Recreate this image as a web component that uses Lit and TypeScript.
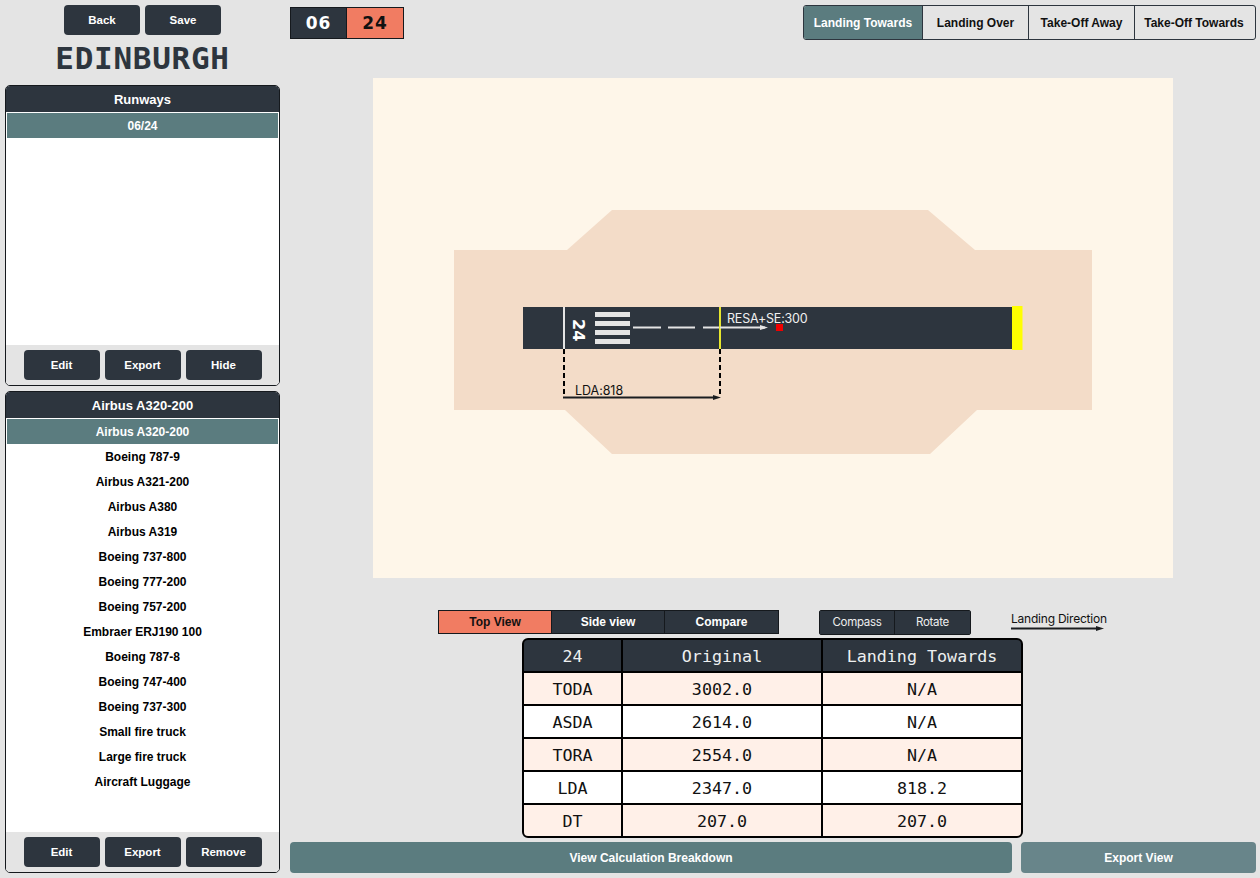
import { LitElement, html, css, svg } from "lit";
import { customElement, property } from "lit/decorators.js";
import { classMap } from "lit/directives/class-map.js";

const RUNWAYS = ["06/24"];
const AIRCRAFT = [
  "Airbus A320-200",
  "Boeing 787-9",
  "Airbus A321-200",
  "Airbus A380",
  "Airbus A319",
  "Boeing 737-800",
  "Boeing 777-200",
  "Boeing 757-200",
  "Embraer ERJ190 100",
  "Boeing 787-8",
  "Boeing 747-400",
  "Boeing 737-300",
  "Small fire truck",
  "Large fire truck",
  "Aircraft Luggage",
];
const ROWS = [
  ["TODA", "3002.0", "N/A"],
  ["ASDA", "2614.0", "N/A"],
  ["TORA", "2554.0", "N/A"],
  ["LDA", "2347.0", "818.2"],
  ["DT", "207.0", "207.0"],
];

@customElement("list-panel")
export class ListPanel extends LitElement {
  @property() heading = "";
  @property({ type: Array }) items: string[] = [];
  @property({ type: Array }) actions: string[] = [];

  static styles = css`
    :host {
      display: flex;
      flex-direction: column;
      width: 275px;
      box-sizing: border-box;
      border: 1px solid #15191d;
      border-radius: 5px;
      background: #fff;
      overflow: hidden;
      font-family: "Liberation Sans", Arial, sans-serif;
      font-weight: 700;
    }
    .head {
      height: 26px;
      line-height: 27px;
      background: #2d353e;
      color: #fff;
      font-size: 13px;
      text-align: center;
      flex: none;
    }
    .items {
      flex: 1;
      padding: 1px 1px 0;
      background: #fff;
    }
    .item {
      height: 25px;
      line-height: 27px;
      font-size: 12px;
      text-align: center;
      color: #000;
    }
    .item.sel {
      background: #5b7c7f;
      color: #fff;
    }
    .foot {
      flex: none;
      height: 40px;
      box-sizing: border-box;
      padding: 5px 17px 0 17.5px;
      background: #e4e4e4;
      display: flex;
      gap: 5px;
    }
    button {
      width: 76px;
      height: 30px;
      padding: 0;
      border: 0;
      border-radius: 4px;
      background: #2d353e;
      color: #fff;
      font: 700 11.5px "Liberation Sans", Arial, sans-serif;
    }
  `;

  render() {
    return html`
      <div class="head">${this.heading}</div>
      <div class="items">
        ${this.items.map(
          (t, i) => html`<div class=${classMap({ item: true, sel: i === 0 })}>${t}</div>`
        )}
      </div>
      <div class="foot">${this.actions.map((a) => html`<button>${a}</button>`)}</div>
    `;
  }
}

@customElement("runway-view")
export class RunwayView extends LitElement {
  static styles = css`
    :host {
      display: block;
      width: 800px;
      height: 500px;
      background: #fef6e9;
    }
    svg {
      display: block;
    }
    text {
      font-family: Inter, "Liberation Sans", sans-serif;
      font-size: 12.5px;
      letter-spacing: -0.2px;
    }
    .lda {
      letter-spacing: -0.05px;
    }
    .num {
      font-family: "DejaVu Sans", sans-serif;
      font-size: 16px;
      font-weight: 700;
      letter-spacing: 0;
    }
  `;

  render() {
    const stripes = [234, 243, 252, 261];
    const dashes = [[260, 288], [295, 322], [330, 347]];
    return html`
      <svg width="800" height="500" viewBox="0 0 800 500">
        <polygon
          fill="#f3dcc8"
          points="81,172 194,172 239,132 555,132 602,172 719,172 719,332 604,332 557,376 239,376 192,332 81,332"
        />
        <rect x="150" y="229" width="489" height="42" fill="#2d353e" />
        <rect x="639" y="228" width="10.5" height="44" fill="#ffff00" />
        <rect x="190" y="229" width="2" height="42" fill="#e4e4e4" />
        ${stripes.map((y) => svg`<rect x="222" y=${y} width="35" height="5" fill="#e4e4e4" />`)}
        ${dashes.map(([a, b]) => svg`<line x1=${a} x2=${b} y1="249.5" y2="249.5" stroke="#e4e4e4" stroke-width="2" />`)}
        <text class="num" transform="translate(200 241) rotate(90)" fill="#fff">24</text>
        <rect x="346" y="229" width="2" height="42" fill="#e6e62e" />
        <line x1="347" x2="392" y1="249.5" y2="249.5" stroke="#e4e4e4" stroke-width="2" />
        <polygon points="395,249.5 387,247 387,252" fill="#e4e4e4" />
        <rect x="403" y="246" width="7" height="7" fill="#f00000" />
        <text x="354" y="245" fill="#f0f0f0">RESA+SE:300</text>
        <line x1="191" x2="191" y1="271" y2="319" stroke="#000" stroke-width="2" stroke-dasharray="5 3" />
        <line x1="347" x2="347" y1="271" y2="319" stroke="#000" stroke-width="2" stroke-dasharray="5 3" />
        <line x1="190" x2="342" y1="319.5" y2="319.5" stroke="#1a1d20" stroke-width="2" />
        <polygon points="348,319.5 340,317 340,322" fill="#1a1d20" />
        <text class="lda" x="202" y="317" fill="#111">LDA:818</text>
      </svg>
    `;
  }
}

@customElement("app-root")
export class AppRoot extends LitElement {
  static styles = css`
    :host {
      display: grid;
      grid-template-columns: 290px 1fr;
      width: 1260px;
      height: 878px;
      background: #e4e4e4;
      font-family: "Liberation Sans", Arial, sans-serif;
      overflow: hidden;
    }
    .side {
      display: flex;
      flex-direction: column;
      padding: 5px 0 0 5px;
      box-sizing: border-box;
    }
    .side-btns {
      display: flex;
      gap: 5px;
      padding-left: 59px;
    }
    .side-btns button {
      width: 76px;
      height: 30px;
      border: 0;
      padding: 0;
      border-radius: 4px;
      background: #2d353e;
      color: #fff;
      font: 700 11.5px "Liberation Sans", Arial, sans-serif;
    }
    .logo {
      height: 50px;
      width: 275px;
      text-align: center;
      color: #2d353e;
      font: 700 31px/47px "DejaVu Sans Mono", monospace;
      letter-spacing: 0.7px;
    }
    .runways {
      height: 301px;
      margin-bottom: 5px;
    }
    .aircraft {
      height: 482px;
    }
    .main {
      display: flex;
      flex-direction: column;
      width: 966px;
    }
    .top {
      display: flex;
      justify-content: space-between;
      height: 78px;
      box-sizing: border-box;
      padding-top: 5px;
    }
    .ends {
      display: flex;
      margin-top: 2px;
      height: 32px;
      border: 1px solid #15191d;
      box-sizing: border-box;
    }
    .ends div {
      width: 56px;
      box-sizing: border-box;
      text-align: center;
      font: 700 17px/30px "DejaVu Sans", sans-serif;
      letter-spacing: 1px;
    }
    .ends .dark {
      background: #2d353e;
      color: #fff;
      border-right: 1px solid #15191d;
    }
    .ends .hot {
      background: #f17c62;
      color: #111;
    }
    .modes {
      display: flex;
      height: 35px;
      box-sizing: border-box;
      border: 1px solid #2d353e;
      border-radius: 3px;
      overflow: hidden;
    }
    .modes div {
      font-size: 12px;
      font-weight: 700;
      line-height: 35px;
      text-align: center;
      color: #111;
      border-right: 1px solid #2d353e;
      box-sizing: border-box;
    }
    .modes div:last-child {
      border-right: 0;
      padding-right: 2px;
    }
    .modes .on {
      background: #5b7c7f;
      color: #fff;
    }
    .stage {
      display: flex;
      padding-left: 83px;
    }
    .ctrl {
      display: flex;
      align-items: flex-start;
      height: 28px;
      margin-top: 32px;
      padding-left: 148px;
    }
    .views {
      display: flex;
      height: 24px;
      box-sizing: border-box;
      border: 1px solid #15191d;
    }
    .views div {
      width: 113px;
      box-sizing: border-box;
      line-height: 23px;
      font-size: 12px;
      font-weight: 700;
      text-align: center;
      color: #fff;
      background: #2d353e;
      border-right: 1px solid #15191d;
    }
    .views div:last-child {
      border-right: 0;
    }
    .views .hot {
      background: #f17c62;
      color: #111;
    }
    .tools {
      display: flex;
      height: 25px;
      box-sizing: border-box;
      margin-left: 40px;
      border: 1px solid #15191d;
      border-radius: 2px;
    }
    .tools div {
      width: 75px;
      line-height: 23px;
      font-family: Inter, "Liberation Sans", sans-serif;
      font-size: 11.5px;
      letter-spacing: -0.3px;
      text-align: center;
      color: #eee;
      background: #2d353e;
      border-right: 1px solid #15191d;
      box-sizing: border-box;
    }
    .tools div:last-child {
      border-right: 0;
    }
    .legend {
      margin-left: 40px;
      width: 96px;
      white-space: nowrap;
      font-family: Inter, "Liberation Sans", sans-serif;
      font-size: 12px;
      letter-spacing: -0.22px;
      line-height: 17px;
      color: #111;
    }
    .legend svg {
      display: block;
      margin-top: -1px;
    }
    .tbl {
      align-self: flex-start;
      margin-left: 232px;
      width: 501px;
      height: 200px;
      box-sizing: border-box;
      border: 2px solid #000;
      border-radius: 6px;
      overflow: hidden;
      display: grid;
      grid-template-columns: 97px 200px 1fr;
      grid-auto-rows: 1fr;
      gap: 2px 0;
      background: #000;
      font-family: "DejaVu Sans Mono", monospace;
      font-size: 16.7px;
      color: #111;
    }
    .tbl span {
      display: flex;
      align-items: center;
      justify-content: center;
      padding-top: 1px;
      box-sizing: border-box;
      border-left: 2px solid #000;
      background: #fff;
    }
    .tbl span.first {
      border-left: 0;
    }
    .tbl span.pink {
      background: #fff0e8;
    }
    .tbl span.h {
      background: #2d353e;
      color: #eef0f0;
    }
    .bottom {
      display: flex;
      gap: 9px;
      margin-top: 4px;
    }
    .bottom button {
      height: 31px;
      border: 0;
      padding: 0;
      border-radius: 4px;
      color: #fff;
      font: 700 12px "Liberation Sans", Arial, sans-serif;
    }
    .calc {
      width: 722px;
      background: #5b7c7f;
    }
    .export {
      width: 235px;
      background: #68858a;
    }
  `;

  render() {
    const modes: [string, number][] = [
      ["Landing Towards", 119],
      ["Landing Over", 106],
      ["Take-Off Away", 106],
      ["Take-Off Towards", 120],
    ];
    return html`
      <div class="side">
        <div class="side-btns"><button>Back</button><button>Save</button></div>
        <div class="logo">EDINBURGH</div>
        <list-panel
          class="runways"
          heading="Runways"
          .items=${RUNWAYS}
          .actions=${["Edit", "Export", "Hide"]}
        ></list-panel>
        <list-panel
          class="aircraft"
          heading="Airbus A320-200"
          .items=${AIRCRAFT}
          .actions=${["Edit", "Export", "Remove"]}
        ></list-panel>
      </div>
      <div class="main">
        <div class="top">
          <div class="ends"><div class="dark">06</div><div class="hot">24</div></div>
          <div class="modes">
            ${modes.map(
              ([m, w], i) =>
                html`<div class=${i === 0 ? "on" : ""} style="width:${w}px">${m}</div>`
            )}
          </div>
        </div>
        <div class="stage"><runway-view></runway-view></div>
        <div class="ctrl">
          <div class="views">
            <div class="hot">Top View</div>
            <div>Side view</div>
            <div>Compare</div>
          </div>
          <div class="tools"><div>Compass</div><div>Rotate</div></div>
          <div class="legend">
            Landing Direction
            <svg width="94" height="5" viewBox="0 0 94 5">
              <line x1="0" x2="88" y1="2.5" y2="2.5" stroke="#1a1d20" stroke-width="2" />
              <polygon points="93,2.5 85,0 85,5" fill="#1a1d20" />
            </svg>
          </div>
        </div>
        <div class="tbl">
          <span class="h first">24</span><span class="h">Original</span><span class="h">Landing Towards</span>
          ${ROWS.map((r, i) =>
            r.map(
              (c, j) =>
                html`<span class=${classMap({ first: j === 0, pink: i % 2 === 0 })}>${c}</span>`
            )
          )}
        </div>
        <div class="bottom">
          <button class="calc">View Calculation Breakdown</button>
          <button class="export">Export View</button>
        </div>
      </div>
    `;
  }
}
